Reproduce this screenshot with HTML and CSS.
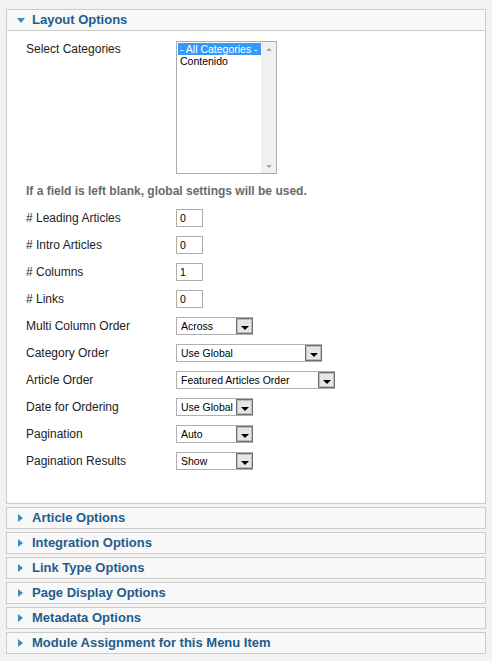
FILE: index.html
```html
<!DOCTYPE html>
<html>
<head>
<meta charset="utf-8">
<link rel="stylesheet" href="styles.css">
</head>
<body>
<div class="page">
  <div class="panel open">
    <div class="head"><span class="tri-down"></span><span class="title">Layout Options</span></div>
    <div class="body">
      <div class="catrow">
        <div class="lbl top">Select Categories</div>
        <div class="listbox">
          <div class="items">
            <div class="item sel-item">- All Categories -</div>
            <div class="item">Contenido</div>
          </div>
          <div class="sbar">
            <span class="sb-up"></span>
            <span class="sb-down"></span>
          </div>
        </div>
      </div>
      <div class="note">If a field is left blank, global settings will be used.</div>
      <div class="rows">
        <div class="lbl"># Leading Articles</div><div class="inp">0</div>
        <div class="lbl"># Intro Articles</div><div class="inp">0</div>
        <div class="lbl"># Columns</div><div class="inp">1</div>
        <div class="lbl"># Links</div><div class="inp">0</div>
        <div class="lbl">Multi Column Order</div><div class="sel w77"><span class="val">Across</span><span class="btn"><i></i></span></div>
        <div class="lbl">Category Order</div><div class="sel w146"><span class="val">Use Global</span><span class="btn"><i></i></span></div>
        <div class="lbl">Article Order</div><div class="sel w159"><span class="val">Featured Articles Order</span><span class="btn"><i></i></span></div>
        <div class="lbl">Date for Ordering</div><div class="sel w77"><span class="val">Use Global</span><span class="btn"><i></i></span></div>
        <div class="lbl">Pagination</div><div class="sel w77"><span class="val">Auto</span><span class="btn"><i></i></span></div>
        <div class="lbl">Pagination Results</div><div class="sel w77"><span class="val">Show</span><span class="btn"><i></i></span></div>
      </div>
    </div>
  </div>
  <div class="panel closed"><div class="head"><span class="tri-right"></span><span class="title">Article Options</span></div></div>
  <div class="panel closed"><div class="head"><span class="tri-right"></span><span class="title">Integration Options</span></div></div>
  <div class="panel closed"><div class="head"><span class="tri-right"></span><span class="title">Link Type Options</span></div></div>
  <div class="panel closed"><div class="head"><span class="tri-right"></span><span class="title">Page Display Options</span></div></div>
  <div class="panel closed"><div class="head"><span class="tri-right"></span><span class="title">Metadata Options</span></div></div>
  <div class="panel closed"><div class="head"><span class="tri-right"></span><span class="title">Module Assignment for this Menu Item</span></div></div>
</div>
</body>
</html>
```
FILE: styles.css
```css
html, body {
  margin: 0;
  padding: 0;
  background: #f2f2f2;
  font-family: "Liberation Sans", Arial, sans-serif;
}
.page {
  padding: 9px 6px 0 6px;
}
.panel {
  border: 1px solid #cccccc;
  background: #f8f8f8;
}
.panel.closed {
  margin-top: 3px;
}
.head {
  height: 20px;
  display: flex;
  align-items: center;
  padding-left: 10px;
  box-sizing: border-box;
}
.open .head {
  border-bottom: 1px solid #cccccc;
  height: 21px;
}
.title {
  font-weight: bold;
  font-size: 13px;
  color: #1f5d8d;
  line-height: 16px;
}
.tri-down {
  width: 0;
  height: 0;
  border-left: 4px solid transparent;
  border-right: 4px solid transparent;
  border-top: 5px solid #3a8cbf;
  margin-right: 7px;
  margin-top: 1px;
}
.tri-right {
  width: 0;
  height: 0;
  border-top: 4px solid transparent;
  border-bottom: 4px solid transparent;
  border-left: 5px solid #3a8cbf;
  margin-left: 1px;
  margin-right: 9px;
}
.body {
  background: #ffffff;
  padding: 10px 0 33px 19px;
  height: 472px;
  box-sizing: border-box;
}
.lbl {
  font-size: 12px;
  color: #222222;
  line-height: 14px;
}
.catrow {
  display: grid;
  grid-template-columns: 150px auto;
  align-items: start;
}
.lbl.top {
  padding-top: 1px;
}
.listbox {
  width: 101px;
  height: 133px;
  box-sizing: border-box;
  border: 1px solid #ababab;
  display: flex;
  background: #fff;
}
.items {
  flex: 1;
  padding: 1px 0 0 1px;
}
.item {
  font-size: 10.5px;
  line-height: 12px;
  padding-left: 2px;
  color: #000;
  height: 12px;
}
.sel-item {
  background: #3399ff;
  color: #ffffff;
}
.sbar {
  width: 15px;
  background: #f0f0f0;
  display: flex;
  flex-direction: column;
  justify-content: space-between;
  align-items: center;
  padding: 6px 0 5px 0;
  box-sizing: border-box;
}
.sb-up {
  width: 0; height: 0;
  border-left: 3px solid transparent;
  border-right: 3px solid transparent;
  border-bottom: 3px solid #a8a8a8;
}
.sb-down {
  width: 0; height: 0;
  border-left: 3px solid transparent;
  border-right: 3px solid transparent;
  border-top: 3px solid #a8a8a8;
}
.note {
  margin-top: 10px;
  font-size: 12px;
  font-weight: bold;
  color: #6a6a6a;
  line-height: 14px;
}
.rows {
  margin-top: 11px;
  display: grid;
  grid-template-columns: 150px auto;
  grid-auto-rows: 18px;
  row-gap: 9px;
  align-items: center;
  justify-items: start;
}
.inp {
  width: 27px;
  height: 18px;
  box-sizing: border-box;
  border: 1px solid #acacac;
  font-size: 10.5px;
  line-height: 16px;
  padding-left: 3px;
  color: #000;
}
.sel {
  height: 18px;
  box-sizing: border-box;
  border: 1px solid #b0b0b0;
  display: flex;
  align-items: center;
  background: #fff;
}
.w77 { width: 77px; }
.w146 { width: 146px; }
.w159 { width: 159px; }
.val {
  flex: 1;
  font-size: 10.5px;
  color: #000;
  padding-left: 4px;
  white-space: nowrap;
  overflow: hidden;
}
.btn {
  width: 17px;
  height: 16px;
  box-sizing: border-box;
  border: 1px solid #6f6f6f;
  box-shadow: inset 0 0 0 1px #bdbdbd;
  background: #e6e6e6;
  display: flex;
  align-items: center;
  justify-content: center;
  margin-right: -1px;
}
.btn i {
  display: block;
  width: 0; height: 0;
  border-left: 4px solid transparent;
  border-right: 4px solid transparent;
  border-top: 4px solid #000;
  margin-top: 3px;
}
```
